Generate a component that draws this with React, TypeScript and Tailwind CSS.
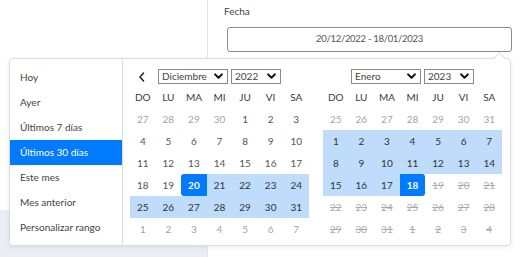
import React from 'react';

type Kind = 'out' | 'day' | 'range' | 'start' | 'end' | 'off';
type Cell = [number, Kind];

const weekDays = ['DO', 'LU', 'MA', 'MI', 'JU', 'VI', 'SA'];

const presets = [
  'Hoy',
  'Ayer',
  'Últimos 7 días',
  'Últimos 30 días',
  'Este mes',
  'Mes anterior',
  'Personalizar rango',
];

const seq = (from: number, to: number, kind: Kind): Cell[] =>
  Array.from({ length: to - from + 1 }, (_, i) => [from + i, kind] as Cell);

const december: Cell[] = [
  ...seq(27, 30, 'out'),
  ...seq(1, 19, 'day'),
  [20, 'start'],
  ...seq(21, 31, 'range'),
  ...seq(1, 7, 'out'),
];

const january: Cell[] = [
  ...seq(25, 31, 'out'),
  ...seq(1, 17, 'range'),
  [18, 'end'],
  ...seq(19, 31, 'off'),
  ...seq(1, 4, 'off'),
];

const cellClass: Record<Kind, string> = {
  out: 'text-[#a3a3a3]',
  day: 'text-[#555]',
  range: 'bg-[#bfdcfc] text-[#333]',
  start: 'bg-[#007aff] text-white font-bold rounded-l-[3px]',
  end: 'bg-[#007aff] text-white font-bold rounded-r-[3px]',
  off: 'text-[#aaa] line-through',
};

const Chevron = () => (
  <svg width="9" height="7" viewBox="0 0 9 7" className="shrink-0">
    <path d="M1.1 1.4 4.5 4.8 7.9 1.4" fill="none" stroke="#111" strokeWidth="2" strokeLinecap="round" strokeLinejoin="round" />
  </svg>
);

const Select = ({ label, width }: { label: string; width: string }) => (
  <div className={`${width} h-[15px] border border-[#8a8a8a] flex items-center justify-between pl-[3px] pr-[4px] text-[10px] leading-none text-[#444]`}>
    <span>{label}</span>
    <Chevron />
  </div>
);

const Month = ({ month, year, cells, showPrev }: { month: string; year: string; cells: Cell[]; showPrev?: boolean }) => (
  <div className="w-[179px]">
    <div className="relative h-[20px] flex items-center justify-center gap-[3px]">
      {showPrev && (
        <svg className="absolute left-[8px] top-[6px]" width="8" height="10" viewBox="0 0 8 10">
          <path d="M5.5 1 2 5l3.5 4" fill="none" stroke="#222" strokeWidth="1.5" strokeLinecap="round" strokeLinejoin="round" />
        </svg>
      )}
      <Select label={month} width="w-[70px]" />
      <Select label={year} width="w-[50px]" />
    </div>
    <div className="grid grid-cols-7">
      {weekDays.map((d) => (
        <div key={d} className="h-[22px] flex items-center justify-center text-[10px] text-[#3a3a3a]">
          {d}
        </div>
      ))}
      {cells.map(([n, kind], i) => (
        <div key={i} className={`h-[22px] flex items-center justify-center text-[10px] ${cellClass[kind]}`}>
          {n}
        </div>
      ))}
    </div>
  </div>
);

const App: React.FC = () => {
  return (
    <div className="relative w-[532px] h-[257px] overflow-hidden bg-white font-['Lato',sans-serif]">
      <div className="flex h-full">
        <div className="w-[207px] flex flex-col">
          <div className="h-[210px] bg-white" />
          <div className="flex-1 bg-[#e9eef5]" />
        </div>
        <div className="flex-1 border-l border-[#e3e3e3] pl-4 pt-[3px]">
          <div className="text-[10px] text-[#444] h-[16px] leading-[16px]">Fecha</div>
          <div className="mt-[8px] ml-[3px] w-[285px] h-[25px] border border-[#8c8c8c] rounded-[3px] flex items-center justify-center text-[9.5px] tracking-[-0.3px] text-[#555]">
            20/12/2022 - 18/01/2023
          </div>
        </div>
      </div>

      <div className="absolute left-[9px] top-[58px] w-[502px] h-[188px] bg-white border border-[#dcdcdc] rounded-[4px] shadow-[0_1px_4px_rgba(0,0,0,0.08)] flex">
        <div className="absolute -top-[5px] left-[485px] w-[9px] h-[9px] bg-white border-l border-t border-[#dcdcdc] rotate-45" />
        <div className="w-[113px] border-r border-[#dcdcdc] pt-[6px]">
          {presets.map((p) => (
            <div
              key={p}
              className={`h-[25px] pl-[10px] flex items-center text-[10px] ${
                p === 'Últimos 30 días' ? 'bg-[#007aff] text-white' : 'text-[#444]'
              }`}
            >
              {p}
            </div>
          ))}
        </div>
        <div className="flex gap-[14px] pl-[7px] pt-[7px]">
          <Month month="Diciembre" year="2022" cells={december} showPrev />
          <Month month="Enero" year="2023" cells={january} />
        </div>
      </div>
    </div>
  );
};

export default App;
